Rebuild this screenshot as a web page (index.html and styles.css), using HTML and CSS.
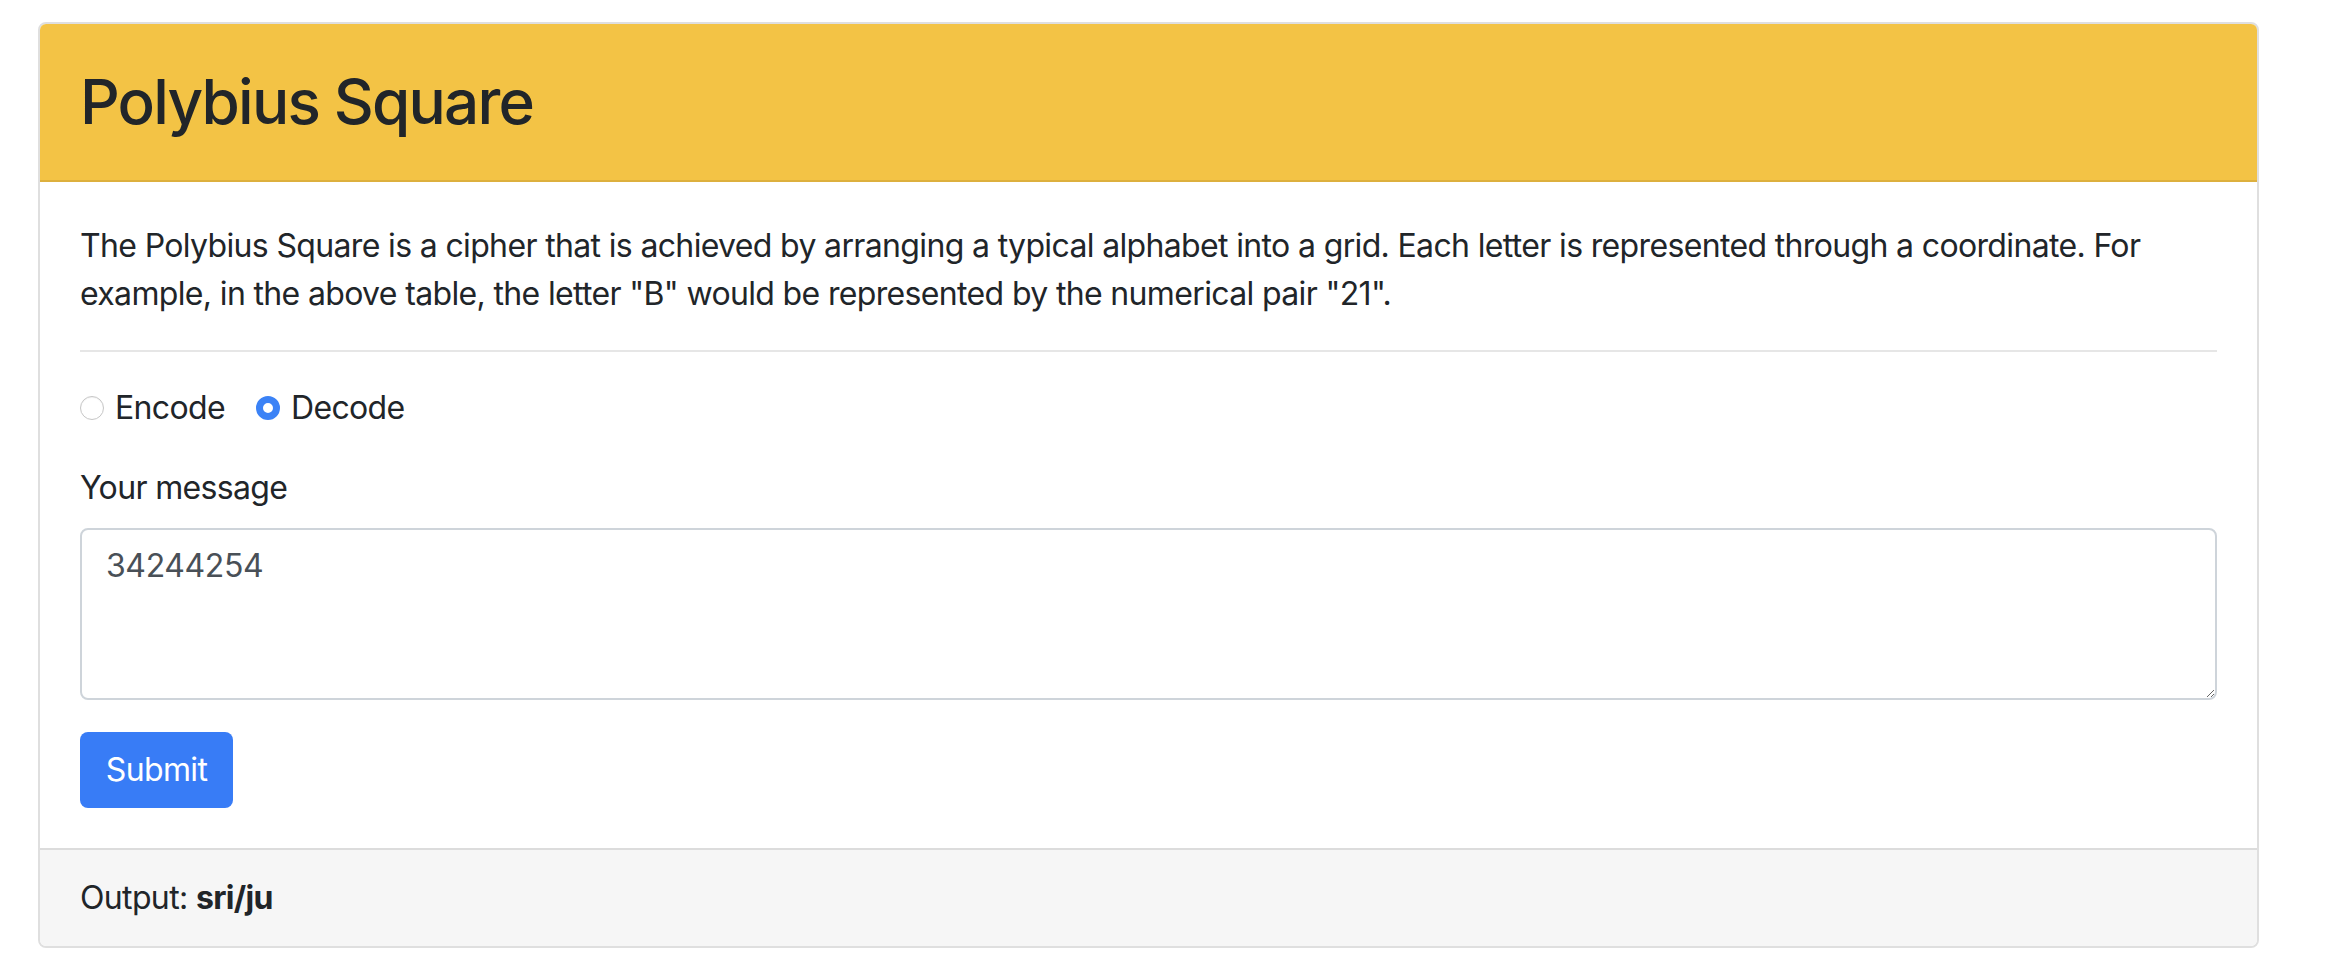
FILE: index.html
```html
<!DOCTYPE html>
<html lang="en">
<head>
<meta charset="utf-8">
<title>Polybius Square</title>
<link rel="stylesheet" href="styles.css">
</head>
<body>
<div class="card">
  <div class="card-header">
    <h1 class="title">Polybius Square</h1>
  </div>
  <div class="card-body">
    <p class="intro">The Polybius Square is a cipher that is achieved by arranging a typical alphabet into a grid. Each letter is represented through a coordinate. For example, in the above table, the letter "B" would be represented by the numerical pair "21".</p>
    <hr class="divider">
    <form class="cipher-form">
      <div class="form-group radios">
        <label class="radio-option"><input type="radio" name="mode" value="encode" class="radio"><span>Encode</span></label>
        <label class="radio-option"><input type="radio" name="mode" value="decode" class="radio" checked><span>Decode</span></label>
      </div>
      <div class="form-group">
        <label class="field-label" for="message">Your message</label>
        <textarea id="message" class="message" rows="3">34244254</textarea>
      </div>
      <button type="button" class="btn-submit">Submit</button>
    </form>
  </div>
  <div class="card-footer">Output: <strong>sri/ju</strong></div>
</div>
</body>
</html>
```
FILE: styles.css
```css
* {
  box-sizing: border-box;
}

html, body {
  margin: 0;
  padding: 0;
  background: #ffffff;
}

body {
  font-family: Inter, "Noto Sans", "Liberation Sans", sans-serif;
  font-size: 32px;
  line-height: 48px;
  letter-spacing: -0.65px;
  color: #212529;
  padding: 22px 0 0 38px;
}

.card {
  width: 2221px;
  border: 2px solid #dfdfdf;
  border-radius: 8px;
  overflow: hidden;
  background: #ffffff;
}

.card-header {
  background: #f3c345;
  border-bottom: 2px solid #ddb03e;
  padding: 30px 40px;
}

.title {
  margin: 0;
  font-size: 62px;
  line-height: 96px;
  font-weight: 500;
  letter-spacing: -1.8px;
}

.card-body {
  padding: 40px;
}

.intro {
  margin: 0 0 32px;
}

.divider {
  margin: 0 0 32px;
  border: 0;
  border-top: 2px solid #e6e6e6;
}

.cipher-form {
  margin: 0;
}

.form-group {
  margin-bottom: 32px;
}

.radios {
  display: flex;
  gap: 31px;
}

.radio-option {
  display: flex;
  align-items: center;
  gap: 11px;
}

.radio {
  appearance: none;
  -webkit-appearance: none;
  margin: 0;
  width: 24px;
  height: 24px;
  border-radius: 50%;
  border: 1px solid #c6c6c6;
  background: #ffffff;
  box-shadow: inset 0 1px 1px rgba(0,0,0,0.05);
}

.radio:checked {
  border: 7px solid #3b82f6;
  background: #ffffff;
  box-shadow: none;
}

.field-label {
  display: block;
  margin-bottom: 16px;
}

.message {
  display: block;
  width: 100%;
  height: 172px;
  padding: 12px 24px;
  border: 2px solid #ced4da;
  border-radius: 8px;
  font-family: inherit;
  font-size: 32px;
  line-height: 48px;
  letter-spacing: -0.4px;
  color: #495057;
  resize: vertical;
}

.btn-submit {
  display: block;
  width: 153px;
  height: 76px;
  padding: 0;
  border: 0;
  border-radius: 8px;
  background: #387cf6;
  color: #ffffff;
  font-family: inherit;
  font-size: 32px;
  line-height: 48px;
  letter-spacing: -0.65px;
}

.card-footer {
  background: #f6f6f6;
  border-top: 2px solid #dcdcdc;
  padding: 24px 40px;
}

.card-footer strong {
  font-weight: 700;
}
```
